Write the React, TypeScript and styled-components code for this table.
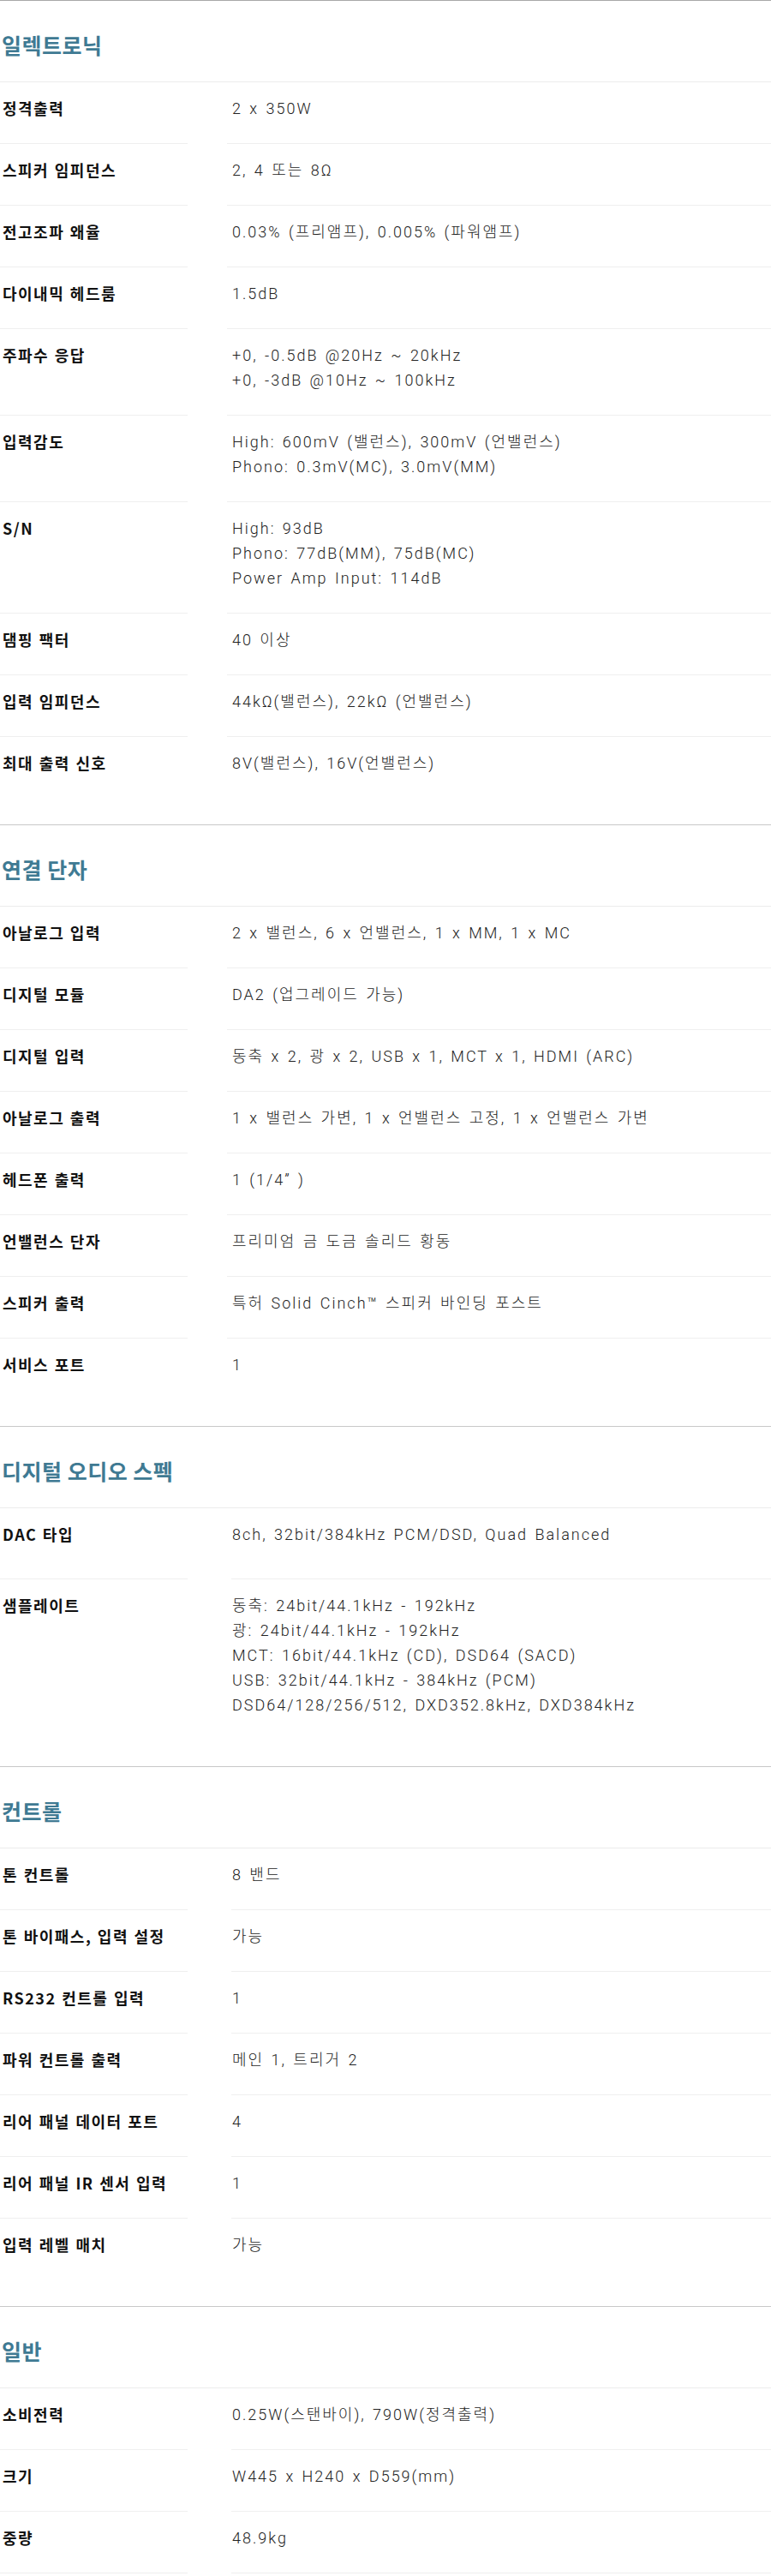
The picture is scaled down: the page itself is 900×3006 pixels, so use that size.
import styled, { createGlobalStyle } from 'styled-components'

interface Spec {
  label: string
  lines: string[]
  tall?: boolean
}

interface Section {
  title: string
  wide?: boolean
  rows: Spec[]
}

const sections: Section[] = [
  {
    title: '일렉트로닉',
    wide: true,
    rows: [
      { label: '정격출력', lines: ['2 x 350W'] },
      { label: '스피커 임피던스', lines: ['2, 4 또는 8Ω'] },
      { label: '전고조파 왜율', lines: ['0.03% (프리앰프), 0.005% (파워앰프)'] },
      { label: '다이내믹 헤드룸', lines: ['1.5dB'] },
      { label: '주파수 응답', lines: ['+0, -0.5dB @20Hz ~ 20kHz', '+0, -3dB @10Hz ~ 100kHz'] },
      { label: '입력감도', lines: ['High: 600mV (밸런스), 300mV (언밸런스)', 'Phono: 0.3mV(MC), 3.0mV(MM)'] },
      { label: 'S/N', lines: ['High: 93dB', 'Phono: 77dB(MM), 75dB(MC)', 'Power Amp Input: 114dB'] },
      { label: '댐핑 팩터', lines: ['40 이상'] },
      { label: '입력 임피던스', lines: ['44kΩ(밸런스), 22kΩ (언밸런스)'] },
      { label: '최대 출력 신호', lines: ['8V(밸런스), 16V(언밸런스)'] },
    ],
  },
  {
    title: '연결 단자',
    wide: true,
    rows: [
      { label: '아날로그 입력', lines: ['2 x 밸런스, 6 x 언밸런스, 1 x MM, 1 x MC'] },
      { label: '디지털 모듈', lines: ['DA2 (업그레이드 가능)'] },
      { label: '디지털 입력', lines: ['동축 x 2, 광 x 2, USB x 1, MCT x 1, HDMI (ARC)'] },
      { label: '아날로그 출력', lines: ['1 x 밸런스 가변, 1 x 언밸런스 고정, 1 x 언밸런스 가변'] },
      { label: '헤드폰 출력', lines: ['1 (1/4” )'] },
      { label: '언밸런스 단자', lines: ['프리미엄 금 도금 솔리드 황동'] },
      { label: '스피커 출력', lines: ['특허 Solid Cinch™ 스피커 바인딩 포스트'] },
      { label: '서비스 포트', lines: ['1'] },
    ],
  },
  {
    title: '디지털 오디오 스펙',
    rows: [
      { label: 'DAC 타입', lines: ['8ch, 32bit/384kHz PCM/DSD, Quad Balanced'], tall: true },
      {
        label: '샘플레이트',
        lines: [
          '동축: 24bit/44.1kHz - 192kHz',
          '광: 24bit/44.1kHz - 192kHz',
          'MCT: 16bit/44.1kHz (CD), DSD64 (SACD)',
          'USB: 32bit/44.1kHz - 384kHz (PCM)',
          'DSD64/128/256/512, DXD352.8kHz, DXD384kHz',
        ],
      },
    ],
  },
  {
    title: '컨트롤',
    rows: [
      { label: '톤 컨트롤', lines: ['8 밴드'] },
      { label: '톤 바이패스, 입력 설정', lines: ['가능'] },
      { label: 'RS232 컨트롤 입력', lines: ['1'] },
      { label: '파워 컨트롤 출력', lines: ['메인 1, 트리거 2'] },
      { label: '리어 패널 데이터 포트', lines: ['4'] },
      { label: '리어 패널 IR 센서 입력', lines: ['1'] },
      { label: '입력 레벨 매치', lines: ['가능'] },
    ],
  },
  {
    title: '일반',
    rows: [
      { label: '소비전력', lines: ['0.25W(스탠바이), 790W(정격출력)'] },
      { label: '크기', lines: ['W445 x H240 x D559(mm)'] },
      { label: '중량', lines: ['48.9kg'] },
    ],
  },
]

const App = () => {
  return (
    <>
      <GlobalStyle />
      <Page>
        {sections.map((section, si) => (
          <Block key={section.title}>
            <Title>{section.title}</Title>
            {section.rows.map((row, ri) => {
              // the last row of a section has no rule; the page is cut inside the last section
              const last = ri === section.rows.length - 1 && si !== sections.length - 1
              return (
                <Row key={row.label} $wide={section.wide}>
                  <Label $last={last} $tall={row.tall}>{row.label}</Label>
                  <Value $last={last} $tall={row.tall} $wide={section.wide}>
                    {row.lines.map(line => (
                      <div key={line}>{line}</div>
                    ))}
                  </Value>
                </Row>
              )
            })}
          </Block>
        ))}
      </Page>
    </>
  )
}

export default App

const GlobalStyle = createGlobalStyle`
  body {
    margin: 0;
    background: #fff;
    font-family: "Noto Sans CJK KR", "Noto Sans", sans-serif;
  }
`

const Page = styled.div`
  width: 900px;
  height: 3006px;
  overflow: hidden;
`

const Block = styled.section`
  border-top: 1px solid #c8c8c8;
  padding-bottom: 30px;

  &:first-child {
    border-top-color: #a8a8a8;
  }
`

const Title = styled.h2`
  margin: 0;
  padding: 36px 0 28px 2px;
  height: 30px;
  line-height: 30px;
  font-size: 25px;
  font-weight: 700;
  letter-spacing: 0.5px;
  color: #3f7a93;
  border-bottom: 1px solid #ececec;
`

const Row = styled.div<{ $wide?: boolean }>`
  display: grid;
  grid-template-columns: 219px 1fr;
  column-gap: ${p => (p.$wide ? '46px' : '51px')};
`

const Label = styled.div<{ $last?: boolean; $tall?: boolean }>`
  padding: 16px 0 ${p => (p.$tall ? '37px' : '26px')} 3px;
  line-height: 29px;
  font-size: 18px;
  font-weight: 700;
  letter-spacing: 1.5px;
  word-spacing: 1px;
  color: #111;
  white-space: nowrap;
  border-bottom: 1px solid ${p => (p.$last ? 'transparent' : '#efefef')};
`

const Value = styled.div<{ $last?: boolean; $tall?: boolean; $wide?: boolean }>`
  padding: 16px 0 ${p => (p.$tall ? '37px' : '26px')} ${p => (p.$wide ? '6px' : '1px')};
  line-height: 29px;
  font-family: Roboto, "Noto Sans CJK KR", sans-serif;
  font-size: 18px;
  font-weight: 300;
  letter-spacing: 2px;
  word-spacing: 2px;
  color: #222;
  border-bottom: 1px solid ${p => (p.$last ? 'transparent' : '#efefef')};
`
